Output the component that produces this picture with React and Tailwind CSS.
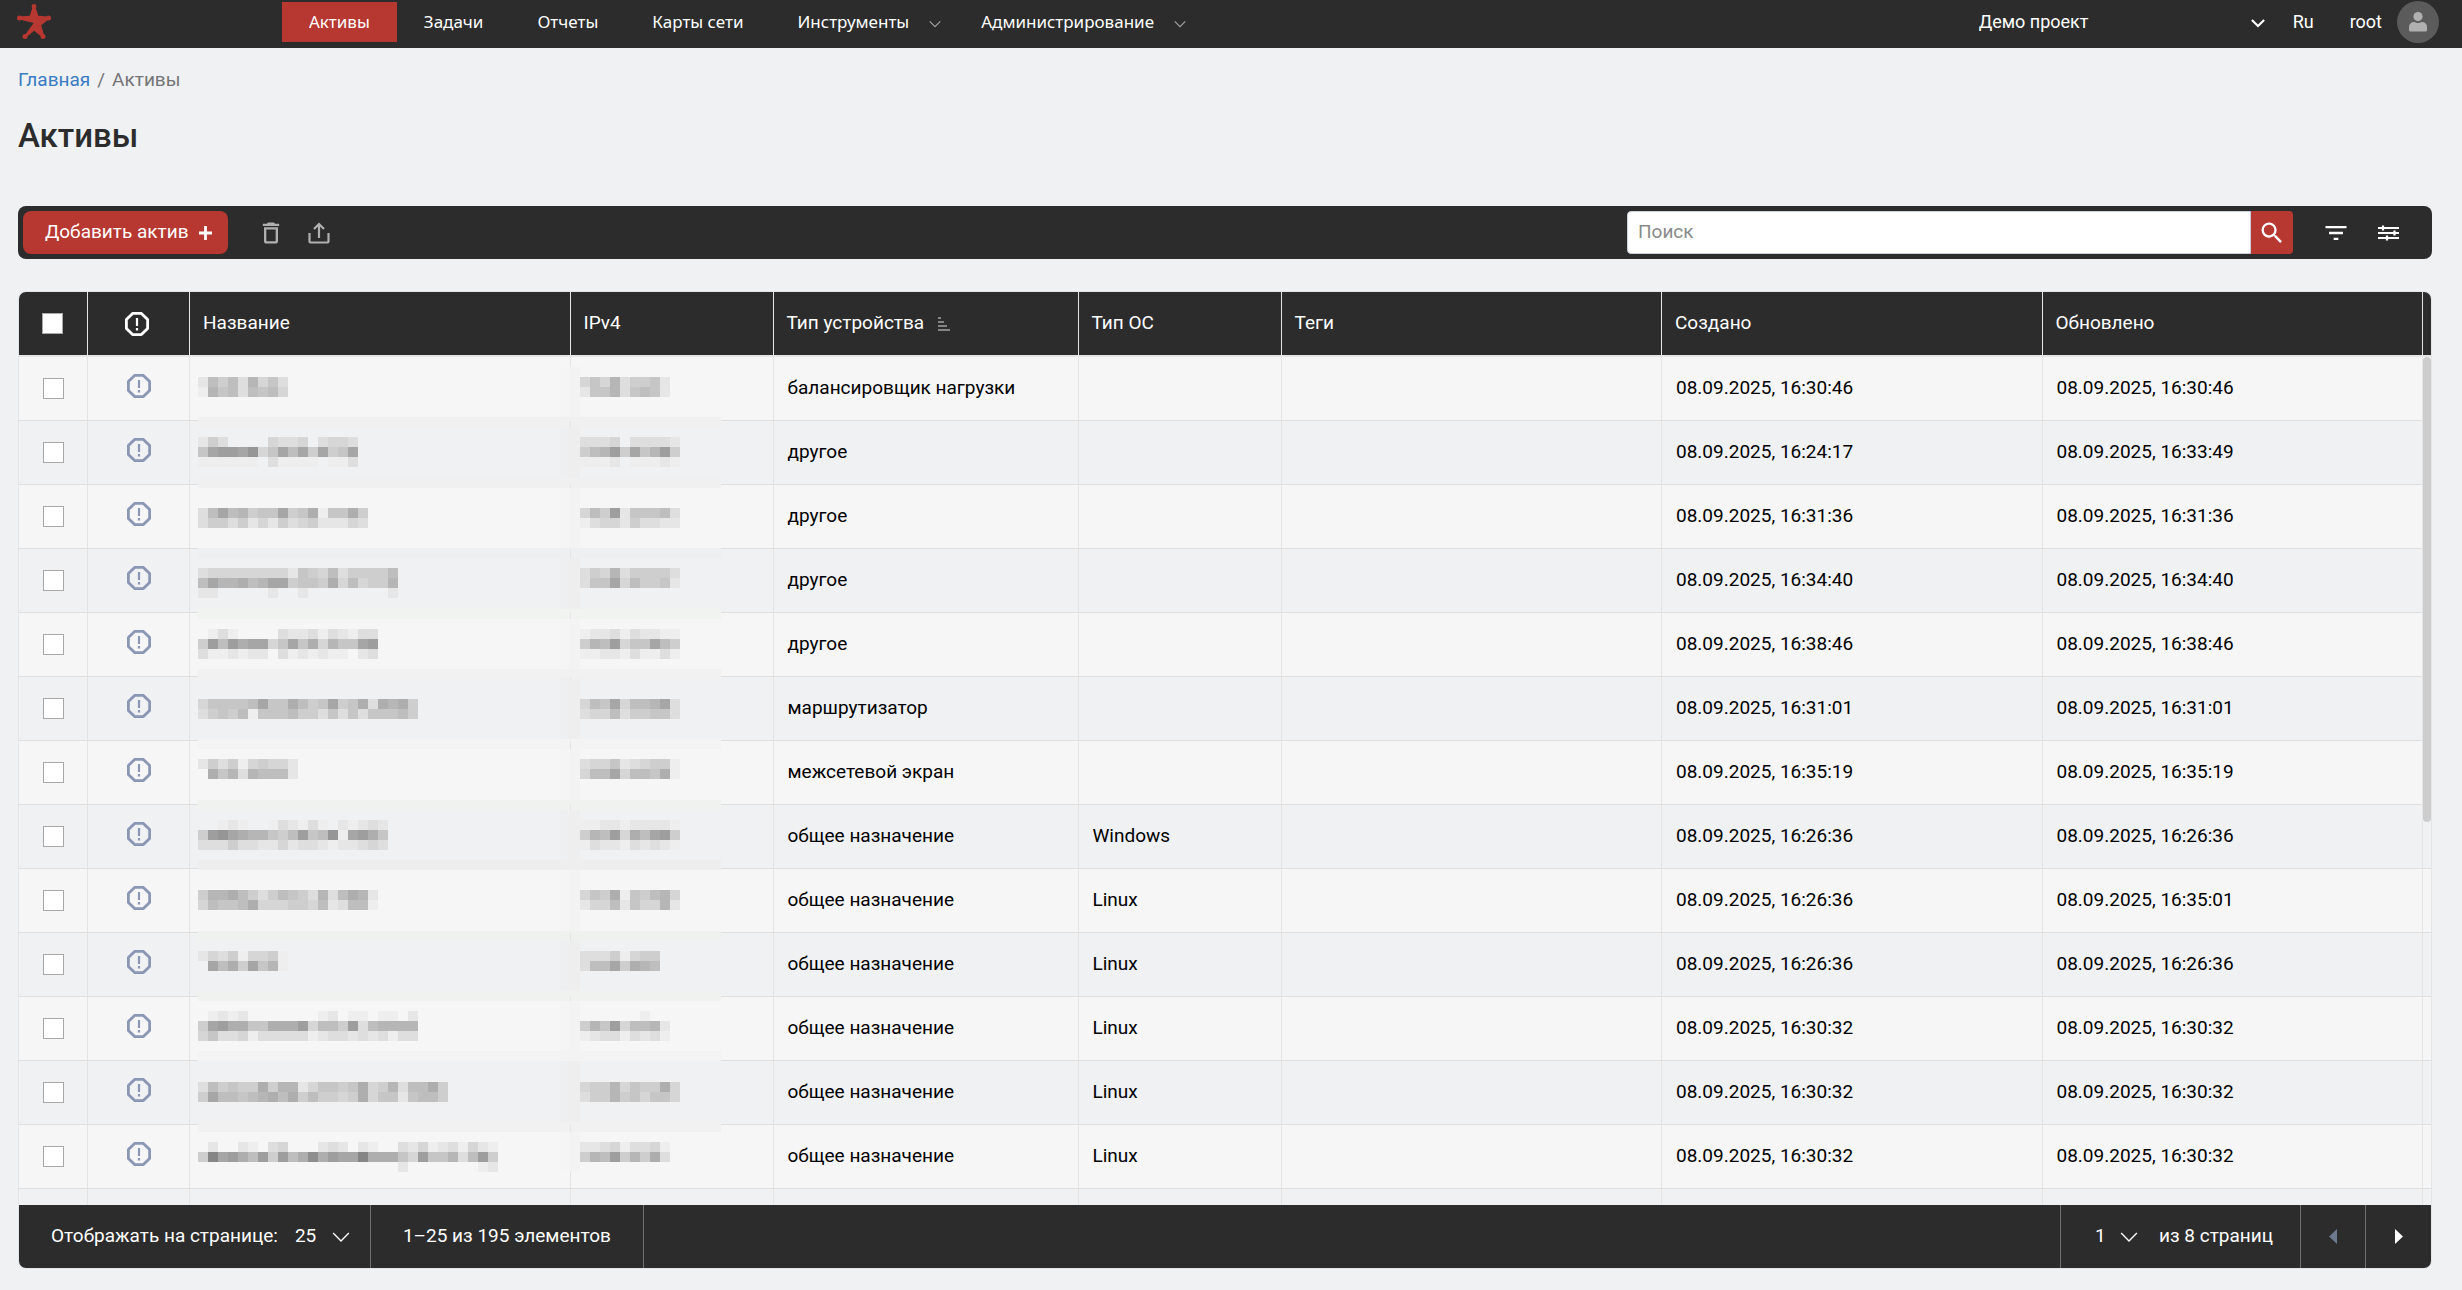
import React, { useState } from "react";
import { MdDeleteOutline, MdFilterList, MdSearch } from "react-icons/md";

const navItems = [
  { title: "Активы", active: true },
  { title: "Задачи" },
  { title: "Отчеты" },
  { title: "Карты сети" },
  { title: "Инструменты", menu: true },
  { title: "Администрирование", menu: true },
];

// name / ip are the hidden values: one digit per 10px block, 0 is empty, f is the darkest
const assets = [
  {
    top: 20, band: 60, bandColor: "#f0f0f0",
    name: ["275738463", "186737674"],
    ip: ["464835562", "266836762"],
    type: "балансировщик нагрузки", os: "", created: "08.09.2025, 16:30:46", updated: "08.09.2025, 16:30:46",
  },
  {
    top: 16, band: 57, bandColor: "#f0f0f0",
    name: ["2530000433403443", "6abbac46a7a5a56a", "1111110311110113"],
    ip: ["3334033332", "578b5a68b5", "1112011121"],
    type: "другое", os: "", created: "08.09.2025, 16:24:17", updated: "08.09.2025, 16:33:49",
  },
  {
    top: 23, band: 63, bandColor: "#eeeff1",
    name: ["37a78566a56916695", "35535242534522243"],
    ip: ["475b266673", "1344253322"],
    type: "другое", os: "", created: "08.09.2025, 16:31:36", updated: "08.09.2025, 16:31:36",
  },
  {
    top: 19, band: 60, bandColor: "#f1f3f1",
    name: ["34444444426547355557", "7a88978aa56659474558", "22000002002000000002"],
    ip: ["3548355553", "366a475562"],
    type: "другое", os: "", created: "08.09.2025, 16:34:40", updated: "08.09.2025, 16:34:40",
  },
  {
    top: 16, band: 56, bandColor: "#f1f1f1",
    name: ["013100003223132133", "5b7b9aa46a694866ab", "311212203121211023"],
    ip: ["1223132211", "587b466a75", "1122131131"],
    type: "другое", os: "", created: "08.09.2025, 16:38:46", updated: "08.09.2025, 16:38:46",
  },
  {
    top: 22, band: 62, bandColor: "#f3f3f3",
    name: ["466667a669756a56939895", "3565716667553636366675"],
    ip: ["476a4778a3", "3447355663"],
    type: "маршрутизатор", os: "", created: "08.09.2025, 16:31:01", updated: "08.09.2025, 16:31:01",
  },
  {
    top: 18, band: 59, bandColor: "#f0f2f0",
    name: ["2535145442", "0968387772"],
    ip: ["3446234551", "477a477691"],
    type: "межсетевой экран", os: "", created: "08.09.2025, 16:35:19", updated: "08.09.2025, 16:35:19",
  },
  {
    top: 15, band: 55, bandColor: "#eeeeee",
    name: ["0012100132131021232", "5bca988657b67c1ab96", "3335332242332122343"],
    ip: ["1122122221", "587b497ab5", "1322132321"],
    type: "общее назначение", os: "Windows", created: "08.09.2025, 16:26:36", updated: "08.09.2025, 16:26:36",
  },
  {
    top: 21, band: 62, bandColor: "#eff1ef",
    name: ["588975357653837982", "476679444554723771"],
    ip: ["4659165784", "2447264482"],
    type: "общее назначение", os: "Linux", created: "08.09.2025, 16:26:36", updated: "08.09.2025, 16:35:01",
  },
  {
    top: 18, band: 58, bandColor: "#f0f2f0",
    name: ["243514451", "0a795a681"],
    ip: ["33351455", "377a5987"],
    type: "общее назначение", os: "Linux", created: "08.09.2025, 16:26:36", updated: "08.09.2025, 16:26:36",
  },
  {
    top: 14, band: 54, bandColor: "#f3f3f3",
    name: ["0121200000001201101102", "5ab9966999b4775b378888", "4633413333312332323133"],
    ip: ["000000100", "586b47782", "123313231"],
    type: "общее назначение", os: "Linux", created: "08.09.2025, 16:30:32", updated: "08.09.2025, 16:30:32",
  },
  {
    top: 21, band: 61, bandColor: "#f1f1f1",
    name: ["3756559588246656945837795", "5a77678979575545946626775"],
    ip: ["4558465594", "3558564664"],
    type: "общее назначение", os: "Linux", created: "08.09.2025, 16:30:32", updated: "08.09.2025, 16:30:32",
  },
  {
    top: 17,
    name: ["020021034000232021003241231421", "5eab97b5b79d9baae99964b66837b5", "000000000000000000002000000012"],
    ip: ["223413341", "587b58593"],
    type: "общее назначение", os: "Linux", created: "08.09.2025, 16:30:32", updated: "08.09.2025, 16:30:32",
  },
  { type: "", os: "", created: "", updated: "" },
];

const Logo = () => (
  <svg width="50" height="46" viewBox="0 0 50 46" fill="#b73731" aria-hidden="true">
    <path d="M23 6h2l3.300 9.800L38 16.600l.8 2.600-7.600 6 3 10.600-2.200 1.400-7.800-6.400-8.200 6.800-1.600-1.800L23.600 23 9.400 19.600l.2-3 10.200-.8z" />
    <circle cx="24" cy="6.300" r="2.400" />
    <circle cx="9.500" cy="18" r="2.500" />
    <circle cx="38.500" cy="18" r="2.500" />
    <circle cx="15" cy="36.600" r="2.500" />
    <circle cx="33" cy="36.600" r="2.500" />
  </svg>
);

const Chevron = ({ className, size = 12, stroke = 1.5 }) => (
  <svg
    className={className}
    width={size}
    height={size}
    viewBox="0 0 16 16"
    fill="none"
    stroke="currentColor"
    strokeWidth={stroke}
    aria-hidden="true"
  >
    <path d="M1 4.500l7 7 7-7" />
  </svg>
);

const StatusIcon = () => (
  <svg className="inline-block" width="26" height="26" viewBox="0 0 26 26" fill="none" stroke="currentColor" aria-hidden="true">
    <path strokeWidth="2.800" strokeLinejoin="round" d="M8.600 2.400h8.800l6.200 6.200v8.800l-6.200 6.200H8.600l-6.200-6.200V8.600z" />
    <path strokeWidth="2.200" d="M13 7v8M13 17v2.600" />
  </svg>
);

const UploadIcon = () => (
  <svg width="24" height="24" viewBox="0 0 24 24" fill="none" stroke="currentColor" strokeWidth="2.200" aria-hidden="true">
    <path d="M2.500 12v8.500a1 1 0 0 0 1 1h17a1 1 0 0 0 1-1V12M12 17V3M7 8l5-5 5 5" />
  </svg>
);

const SettingsIcon = () => (
  <svg width="24" height="24" viewBox="0 0 24 24" stroke="currentColor" strokeWidth="2.200" aria-hidden="true">
    <path d="M1 7h21M1 12h21M1 17h21M6 4.500v5M17.500 9.500v5M10 14.500v5" />
  </svg>
);

const SortIcon = () => (
  <svg width="12" height="16" viewBox="0 0 12 16" stroke="#a3a3a3" strokeWidth="1.500" aria-hidden="true">
    <path d="M0 2h3M0 6h6M0 10h9M0 14h12" />
  </svg>
);

const Blocks = ({ rows, x, y }) =>
  rows.map((row, r) =>
    row.split("").map((level, c) => {
      if (level === "0") return null;
      const v = 246 - parseInt(level, 16) * 8;
      return (
        <rect key={r + "-" + c} x={x + c * 10} y={y + r * 10} width="10" height="10" fill={`rgb(${v},${v},${v})`} />
      );
    })
  );

// covers the name and the ip of a row, and the border between them
const HiddenValue = ({ asset, start, end, even }) => (
  <svg
    className="absolute left-2 top-0 overflow-visible"
    width="523"
    height="64"
    shapeRendering="crispEdges"
    aria-hidden="true"
  >
    <rect x="362" y={start} width="10" height={end - start} fill={even ? "#eeeff1" : "#f5f5f5"} />
    <rect x="371" y={start} width="11" height={end - start} fill={even ? "#eeeeef" : "#f3f3f3"} />
    {asset.band && <rect x="0" y={asset.band} width="523" height="10" fill={asset.bandColor} />}
    <Blocks rows={asset.name} x={0} y={asset.top} />
    <Blocks rows={asset.ip} x={382} y={asset.top} />
  </svg>
);

const TopBar = () => (
  <header className="flex h-12 shrink-0 items-start bg-[#2c2c2c] text-white">
    <a href="#" className="ml-2.5 w-[272px] shrink-0" aria-label="На главную">
      <Logo />
    </a>
    <nav className="mt-0.5 flex font-['Noto_Sans',sans-serif] text-[17px]">
      {navItems.map((item) => (
        <a
          key={item.title}
          href="#"
          className={
            item.active
              ? "flex h-10 items-center bg-[#b73731] px-[27px]"
              : "flex h-10 items-center px-[27px]"
          }
        >
          {item.title}
          {item.menu && <Chevron className="ml-5 -mr-3.5 mt-1 text-[#a3a3a3]" />}
        </a>
      ))}
    </nav>
    <div className="ml-auto flex h-[43px] items-center text-lg">
      <div className="relative w-[290px]">
        <select aria-label="Проект" className="w-full appearance-none bg-transparent">
          <option>Демо проект</option>
        </select>
        <Chevron size={14} stroke={2.4} className="pointer-events-none absolute right-1 top-2" />
      </div>
      <button className="ml-6">Ru</button>
      <button className="ml-9 flex items-center gap-[15px]">
        root
        <span className="mr-[23px] flex h-[42px] w-[42px] items-center justify-center rounded-full bg-[#5b5b5b]">
          <svg width="18" height="20" viewBox="0 0 18 20" fill="#b0b0b0" aria-hidden="true">
            <circle cx="9" cy="4.600" r="4.600" />
            <path d="M0 18v-2.500Q0 10 5.500 10Q9 12 12.500 10Q18 10 18 15.500V18q0 1.500-1.500 1.500h-15Q0 19.500 0 18z" />
          </svg>
        </span>
      </button>
    </div>
  </header>
);

const Toolbar = () => (
  <div className="flex h-[53px] shrink-0 items-center rounded-lg bg-[#2c2c2c] px-[5px] text-white">
    <button className="flex h-[43px] items-center gap-2.5 rounded-lg bg-[#b73731] pl-[22px] pr-4 text-[19px]">
      Добавить актив
      <svg width="13" height="14" viewBox="0 0 13 14" stroke="currentColor" strokeWidth="2.800" aria-hidden="true">
        <path d="M6.500 0v14M0 7h13" />
      </svg>
    </button>
    <button className="ml-[29px] text-[#b0b0b0]" aria-label="Удалить">
      <MdDeleteOutline size={28} />
    </button>
    <button className="ml-[22px] text-[#b0b0b0]" aria-label="Экспорт">
      <UploadIcon />
    </button>
    <form className="ml-auto flex h-[43px] w-[666px]" onSubmit={(e) => e.preventDefault()}>
      <input
        type="search"
        aria-label="Поиск"
        placeholder="Поиск"
        className="min-w-0 flex-1 rounded-l border border-[#c9d0da] bg-white px-2.5 text-[19px] text-black placeholder:text-[#8a8a8a]"
      />
      <button className="flex w-[42px] items-center justify-center rounded-r bg-[#b73731]" aria-label="Найти">
        <MdSearch size={28} />
      </button>
    </form>
    <button className="ml-[29px]" aria-label="Фильтр">
      <MdFilterList size={28} />
    </button>
    <button className="ml-[27px] mr-[26px]" aria-label="Настройки таблицы">
      <SettingsIcon />
    </button>
  </div>
);

const th = "border-b-2 border-r border-b-[#e6e6e6] border-r-[#e6e6e6] bg-[#2c2c2c] pl-[13px] font-normal";
const td = "border-b border-r border-b-[#dfdfdf] border-r-[#e4e4e4] pl-[14px]";
const checkbox = "block h-[21px] w-[21px] appearance-none border border-[#a8a8a8] bg-white checked:bg-[#b73731]";

const AssetsTable = () => {
  const [checked, setChecked] = useState([]);

  const toggle = (i) =>
    setChecked(checked.includes(i) ? checked.filter((c) => c !== i) : [...checked, i]);

  return (
    <div className="relative min-h-0 flex-1">
      <div className="h-full overflow-y-auto [scrollbar-width:none]">
        <table className="w-full table-fixed border-separate border-spacing-0 text-[19px] text-black">
          <colgroup>
            <col className="w-[69px]" />
            <col className="w-[102px]" />
            <col />
            <col className="w-[203px]" />
            <col className="w-[305px]" />
            <col className="w-[203px]" />
            <col />
            <col />
            <col />
            <col className="w-2" />
          </colgroup>
          <thead className="sticky top-0 z-10 text-white">
            <tr className="h-[65px]">
              <th className={th}>
                <input
                  type="checkbox"
                  aria-label="Выбрать все"
                  className={checkbox + " ml-2.5"}
                  checked={checked.length === assets.length}
                  onChange={(e) => setChecked(e.target.checked ? assets.map((_, i) => i) : [])}
                />
              </th>
              <th className={th + " pr-4 text-center leading-none"} aria-label="Статус">
                <StatusIcon />
              </th>
              <th className={th + " text-left"}>Название</th>
              <th className={th + " text-left"}>IPv4</th>
              <th className={th + " text-left"}>
                <span className="flex items-center gap-3.5">
                  Тип устройства
                  <SortIcon />
                </span>
              </th>
              <th className={th + " text-left"}>Тип ОС</th>
              <th className={th + " text-left"}>Теги</th>
              <th className={th + " text-left"}>Создано</th>
              <th className={th + " text-left"}>Обновлено</th>
              <th className="border-b-2 border-b-[#e6e6e6] bg-[#2c2c2c]"></th>
            </tr>
          </thead>
          <tbody>
            {assets.map((asset, i) => {
              const prev = assets[i - 1];
              return (
                <tr key={i} className="h-16 bg-[#f6f6f6] even:bg-[#eff1f3]">
                  <td className={td}>
                    <input
                      type="checkbox"
                      aria-label="Выбрать актив"
                      className={checkbox + " ml-2.5"}
                      checked={checked.includes(i)}
                      onChange={() => toggle(i)}
                    />
                  </td>
                  <td className={td + " pb-1.5 pr-[14px] text-center leading-none text-[#8a96b4]"}>
                    <StatusIcon />
                  </td>
                  <td className={td + " relative"}>
                    {asset.name && (
                      <HiddenValue
                        asset={asset}
                        start={prev ? prev.band - 54 : 10}
                        end={asset.band || 47}
                        even={i % 2 === 1}
                      />
                    )}
                  </td>
                  <td className={td}></td>
                  <td className={td}>{asset.type}</td>
                  <td className={td}>{asset.os}</td>
                  <td className={td}></td>
                  <td className={td}>{asset.created}</td>
                  <td className={td}>{asset.updated}</td>
                  <td className="border-b border-b-[#dfdfdf]"></td>
                </tr>
              );
            })}
          </tbody>
        </table>
      </div>
      {/* scroll thumb */}
      <div className="absolute right-0 top-[65px] h-[465px] w-2 rounded-full bg-[#cdcdcd]" />
    </div>
  );
};

const Pager = () => (
  <div className="flex h-[63px] shrink-0 bg-[#2c2c2c] text-[19px] text-white">
    <div className="flex items-center border-r border-[#6f6f6f] pl-8 pr-5">
      <label htmlFor="page-size">Отображать на странице:</label>
      <div className="relative ml-[17px]">
        <select id="page-size" className="w-[55px] appearance-none bg-transparent">
          <option>25</option>
        </select>
        <Chevron size={18} stroke={1.2} className="pointer-events-none absolute right-0 top-1.5" />
      </div>
    </div>
    <div className="flex items-center border-r border-[#6f6f6f] px-8">1–25 из 195 элементов</div>
    <div className="ml-auto flex items-center border-l border-[#6f6f6f] pl-[34px] pr-[27px]">
      <div className="relative">
        <select aria-label="Страница" className="w-[43px] appearance-none bg-transparent">
          <option>1</option>
        </select>
        <Chevron size={18} stroke={1.2} className="pointer-events-none absolute right-0 top-1.5" />
      </div>
      <span className="ml-[21px]">из 8 страниц</span>
    </div>
    <button className="flex w-[65px] items-center justify-center border-l border-[#6f6f6f] text-[#6b7a8c]" aria-label="Назад">
      <svg width="8" height="15" viewBox="0 0 8 15" fill="currentColor" aria-hidden="true">
        <path d="M8 0v15L0 7.500z" />
      </svg>
    </button>
    <button className="flex w-[66px] items-center justify-center border-l border-[#6f6f6f]" aria-label="Вперед">
      <svg width="8" height="15" viewBox="0 0 8 15" fill="currentColor" aria-hidden="true">
        <path d="M0 0v15l8-7.500z" />
      </svg>
    </button>
  </div>
);

const App = () => {
  return (
    <div className="flex h-screen flex-col bg-[#eff1f3] font-[Roboto,sans-serif] text-[#2c2c2c]">
      <TopBar />
      <main className="flex min-h-0 flex-1 flex-col pb-[21px] pl-[18px] pr-[30px]">
        <div className="mt-[18px] flex gap-[7px] text-[19px] leading-7 text-[#757575]">
          <a href="#" className="text-[#3a7cc2]">
            Главная
          </a>
          <span>/</span>
          <span>Активы</span>
        </div>
        <h1 className="mb-[50px] mt-[22px] text-[33px] font-medium leading-10">Активы</h1>
        <Toolbar />
        <section className="mt-8 flex min-h-0 flex-1 flex-col overflow-hidden rounded-lg border border-[#e4e5e7]">
          <AssetsTable />
          <Pager />
        </section>
      </main>
    </div>
  );
};

export default App;
